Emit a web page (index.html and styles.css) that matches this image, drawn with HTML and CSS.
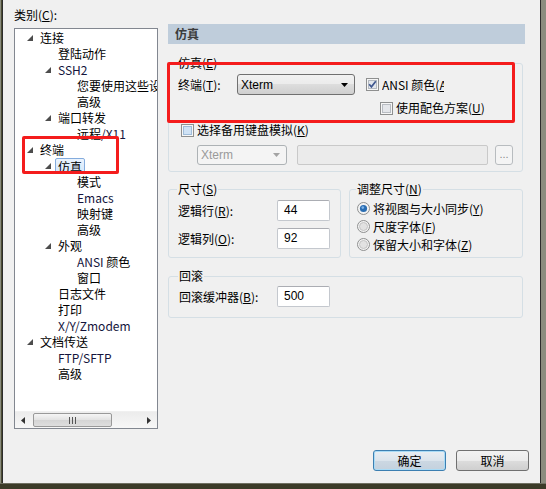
FILE: index.html
```html
<!DOCTYPE html>
<html lang="zh-CN">
<head>
<meta charset="utf-8">
<title>会话选项</title>
<link rel="stylesheet" href="styles.css">
</head>
<body>
<div class="screen">
  <div class="main">
    <div class="edge-l"></div>
    <div class="window">
      <div class="content">
        <div class="left">
          <div class="cat-label">类别(<u>C</u>):</div>
          <div class="tree">
            <div class="tree-rows">
              <div class="row l0"><span class="tw"><svg width="6" height="6" viewBox="0 0 6 6"><polygon points="6,0 6,6 0,6" fill="#4d4d4d"/></svg></span>连接</div>
              <div class="row l1">登陆动作</div>
              <div class="row l1"><span class="tw"><svg width="6" height="6" viewBox="0 0 6 6"><polygon points="6,0 6,6 0,6" fill="#4d4d4d"/></svg></span><span class="en">SSH2</span></div>
              <div class="row l2">您要使用这些设置</div>
              <div class="row l2">高级</div>
              <div class="row l1"><span class="tw"><svg width="6" height="6" viewBox="0 0 6 6"><polygon points="6,0 6,6 0,6" fill="#4d4d4d"/></svg></span>端口转发</div>
              <div class="row l2">远程<span class="en">/X11</span></div>
              <div class="row l0"><span class="tw"><svg width="6" height="6" viewBox="0 0 6 6"><polygon points="6,0 6,6 0,6" fill="#4d4d4d"/></svg></span>终端</div>
              <div class="row l1"><span class="tw"><svg width="6" height="6" viewBox="0 0 6 6"><polygon points="6,0 6,6 0,6" fill="#4d4d4d"/></svg></span><span class="sel">仿真</span></div>
              <div class="row l2">模式</div>
              <div class="row l2"><span class="en">Emacs</span></div>
              <div class="row l2">映射键</div>
              <div class="row l2">高级</div>
              <div class="row l1"><span class="tw"><svg width="6" height="6" viewBox="0 0 6 6"><polygon points="6,0 6,6 0,6" fill="#4d4d4d"/></svg></span>外观</div>
              <div class="row l2"><span class="en">ANSI</span> 颜色</div>
              <div class="row l2">窗口</div>
              <div class="row l1">日志文件</div>
              <div class="row l1">打印</div>
              <div class="row l1"><span class="en">X/Y/Zmodem</span></div>
              <div class="row l0"><span class="tw"><svg width="6" height="6" viewBox="0 0 6 6"><polygon points="6,0 6,6 0,6" fill="#4d4d4d"/></svg></span>文档传送</div>
              <div class="row l1"><span class="en">FTP/SFTP</span></div>
              <div class="row l1">高级</div>
            </div>
            <div class="hscroll">
              <div class="sb-btn"><svg width="4" height="7" viewBox="0 0 4 7"><polygon points="4,0 4,7 0,3.5" fill="#333"/></svg></div>
              <div class="sb-track">
                <div class="sb-thumb"><svg width="7" height="7" viewBox="0 0 7 7"><path d="M0.5 0V7M3.5 0V7M6.5 0V7" stroke="#555" stroke-width="1"/></svg></div>
              </div>
              <div class="sb-btn"><svg width="4" height="7" viewBox="0 0 4 7"><polygon points="0,0 0,7 4,3.5" fill="#333"/></svg></div>
            </div>
          </div>
        </div>

        <div class="right">
          <div class="header">仿真</div>

          <fieldset class="group g-emu">
            <legend>仿真(<u>E</u>)</legend>
            <div class="emu-row1">
              <span class="lbl lbl-term">终端(<u>T</u>):</span>
              <div class="combo">
                <span>Xterm</span>
                <svg width="7" height="4" viewBox="0 0 7 4"><polygon points="0,0 7,0 3.5,4" fill="#000"/></svg>
              </div>
              <span class="check ansi">
                <svg width="13" height="13" viewBox="0 0 13 13"><rect x="0.5" y="0.5" width="12" height="12" fill="#f6f6f6" stroke="#8e8f8f"/><rect x="2.5" y="2.5" width="8" height="8" fill="#e2e6ec" stroke="#b4b9c0"/><path d="M3.2 6.3 L5.4 8.8 L9.8 3.2" stroke="#3f578f" stroke-width="1.7" fill="none"/></svg>
                <span class="ansi-text">ANSI 颜色(<u>A</u>)</span>
              </span>
            </div>
            <div class="emu-row2">
              <span class="check">
                <svg width="13" height="13" viewBox="0 0 13 13"><rect x="0.5" y="0.5" width="12" height="12" fill="#f6f6f6" stroke="#8e8f8f"/><rect x="2.5" y="2.5" width="8" height="8" fill="#e4e6ea" stroke="#b8bcc2"/></svg>
                <span>使用配色方案(<u>U</u>)</span>
              </span>
            </div>
            <div class="emu-row3">
              <span class="check">
                <svg width="13" height="13" viewBox="0 0 13 13"><rect x="0.5" y="0.5" width="12" height="12" fill="#f6f6f6" stroke="#8e8f8f"/><rect x="2.5" y="2.5" width="8" height="8" fill="#cfe2f5" stroke="#9fbcd9"/></svg>
                <span>选择备用键盘模拟(<u>K</u>)</span>
              </span>
            </div>
            <div class="emu-row4">
              <div class="combo disabled">
                <span>Xterm</span>
                <svg width="7" height="4" viewBox="0 0 7 4"><polygon points="0,0 7,0 3.5,4" fill="#a3a3a3"/></svg>
              </div>
              <div class="textbox disabled"></div>
              <div class="dots">...</div>
            </div>
          </fieldset>

          <div class="pair">
            <fieldset class="group g-size">
              <legend>尺寸(<u>S</u>)</legend>
              <div class="field-row">
                <span class="lbl lbl-size">逻辑行(<u>R</u>):</span>
                <div class="textbox num">44</div>
              </div>
              <div class="field-row">
                <span class="lbl lbl-size">逻辑列(<u>O</u>):</span>
                <div class="textbox num">92</div>
              </div>
            </fieldset>
            <fieldset class="group g-adjust">
              <legend>调整尺寸(<u>N</u>)</legend>
              <div class="radio-row">
                <svg width="13" height="13" viewBox="0 0 13 13"><circle cx="6.5" cy="6.5" r="6" fill="#f3f3f3" stroke="#8e8f8f"/><circle cx="6.5" cy="6.5" r="3.6" fill="#2a6db2"/><circle cx="5.8" cy="5.6" r="1.3" fill="#7fb4e8"/></svg>
                <span>将视图与大小同步(<u>Y</u>)</span>
              </div>
              <div class="radio-row">
                <svg width="13" height="13" viewBox="0 0 13 13"><circle cx="6.5" cy="6.5" r="6" fill="#f3f3f3" stroke="#8e8f8f"/><circle cx="6.5" cy="6.5" r="4" fill="#e2e2e2" stroke="#c4c4c4"/></svg>
                <span>尺度字体(<u>F</u>)</span>
              </div>
              <div class="radio-row">
                <svg width="13" height="13" viewBox="0 0 13 13"><circle cx="6.5" cy="6.5" r="6" fill="#f3f3f3" stroke="#8e8f8f"/><circle cx="6.5" cy="6.5" r="4" fill="#e2e2e2" stroke="#c4c4c4"/></svg>
                <span>保留大小和字体(<u>Z</u>)</span>
              </div>
            </fieldset>
          </div>

          <fieldset class="group g-scroll">
            <legend>回滚</legend>
            <div class="field-row">
              <span class="lbl lbl-size">回滚缓冲器(<u>B</u>):</span>
              <div class="textbox num">500</div>
            </div>
          </fieldset>
        </div>
      </div>

      <div class="buttons">
        <div class="btn btn-default">确定</div>
        <div class="btn">取消</div>
      </div>
    </div>
    <div class="edge-r"></div>
  </div>
  <div class="edge-b"></div>

  <div class="mark mark-tree"></div>
  <div class="mark mark-emu"></div>
</div>
</body>
</html>
```

FILE: styles.css
```css
* { box-sizing: border-box; }

html, body {
  margin: 0;
  padding: 0;
  background: #3b3b28;
}

body {
  font-family: "Noto Sans CJK SC", "Liberation Sans", sans-serif;
  font-size: 12px;
  color: #000;
}

u { text-decoration: underline; text-underline-offset: 1px; }

.en { color: #14143c; }

.screen {
  position: relative;
  width: 546px;
  height: 489px;
  display: flex;
  flex-direction: column;
  overflow: hidden;
}

.main {
  display: flex;
  height: 483px;
}

.edge-l {
  width: 3px;
  background: linear-gradient(to right, #8a8c7e 0 1px, #4c4c34 1px 2px, #2c2c2c 2px 3px);
}

.edge-r {
  width: 6px;
  background: #8a8c7e;
  border-left: 1px solid #2c2c2c;
}

.edge-b {
  height: 6px;
  background: #3b3b28;
  border-top: 1px solid #6f7062;
}

.window {
  width: 537px;
  background: #f0f0f0;
  padding: 7px 11px 0 11px;
  display: flex;
  flex-direction: column;
}

.content {
  display: flex;
  gap: 10px;
}

/* ---------- left tree ---------- */
.left {
  width: 144px;
  display: flex;
  flex-direction: column;
}

.cat-label {
  height: 16px;
  line-height: 16px;
  margin-bottom: 5px;
}

.tree {
  height: 401px;
  border: 1px solid #828790;
  background: #fff;
  display: flex;
  flex-direction: column;
  overflow: hidden;
}

.tree-rows {
  flex: 1;
  padding-top: 1px;
  overflow: hidden;
}

.row {
  height: 16px;
  line-height: 16px;
  white-space: nowrap;
  overflow: hidden;
}

.l0 { padding-left: 25px; }
.l1 { padding-left: 43px; }
.l2 { padding-left: 62px; }

.tw {
  display: inline-block;
  width: 14px;
  margin-left: -14px;
  height: 16px;
  vertical-align: top;
  position: relative;
}

.tw svg {
  position: absolute;
  left: 1px;
  top: 5px;
}

.sel {
  display: inline-block;
  height: 17px;
  line-height: 15px;
  padding: 0 2px;
  margin-left: -3px;
  border: 1px solid #84acdd;
  border-radius: 2px;
  background: linear-gradient(#eaf3fd, #d3e5fa);
  vertical-align: top;
}

.hscroll {
  height: 17px;
  display: flex;
  background: linear-gradient(#ececec, #f7f7f7);
  border-top: 1px solid #f0f0f0;
}

.sb-btn {
  width: 17px;
  display: flex;
  align-items: center;
  justify-content: center;
}

.sb-track {
  flex: 1;
  padding: 0 30px 0 2px;
  display: flex;
  align-items: center;
}

.sb-thumb {
  width: 79px;
  height: 14px;
  border: 1px solid #999;
  border-radius: 2px;
  background: linear-gradient(#f5f5f5, #e2e2e2 50%, #d4d4d4 50%, #dedede);
  display: flex;
  align-items: center;
  justify-content: center;
}

/* ---------- right panel ---------- */
.right {
  width: 357px;
  margin-top: 17px;
  display: flex;
  flex-direction: column;
}

.header {
  height: 20px;
  line-height: 20px;
  background: #bfcddb;
  color: #3c3c3c;
  font-weight: bold;
  padding-left: 7px;
}

.group {
  margin: 0;
  min-width: 0;
  border: 1px solid #d5dfe5;
  border-radius: 3px;
  width: 355px;
}

.group legend {
  padding: 0 1px;
  margin-left: -1px;
  line-height: 14px;
  height: 14px;
}

.g-emu {
  margin-top: 12px;
  padding: 4px 0 6px 9px;
}

.emu-row1 {
  display: flex;
  align-items: center;
  height: 21px;
}

.lbl-term { width: 59px; }

.combo {
  width: 118px;
  height: 21px;
  border: 1px solid #707070;
  border-radius: 3px;
  background: linear-gradient(#f2f2f2, #ebebeb 50%, #dddddd 50%, #cfcfcf);
  display: flex;
  align-items: center;
  justify-content: space-between;
  padding: 0 6px 0 3px;
  font-family: "Liberation Sans", sans-serif;
  font-size: 12px;
}

.check {
  display: flex;
  align-items: center;
  gap: 3px;
  height: 14px;
  line-height: 14px;
}

.ansi { margin-left: 11px; }

.ansi-text {
  width: 62px;
  overflow: hidden;
  white-space: nowrap;
}

.emu-row2 {
  margin-top: 6px;
  padding-left: 202px;
}

.emu-row3 {
  margin-top: 8px;
  padding-left: 3px;
}

.emu-row4 {
  margin-top: 8px;
  padding-left: 19px;
  display: flex;
  align-items: center;
  height: 20px;
}

.combo.disabled {
  width: 90px;
  height: 20px;
  background: #f4f4f4;
  border-color: #adb2b5;
  color: #9a9a9a;
}

.textbox {
  height: 21px;
  background: #fff;
  border: 1px solid #c4c8ce;
  border-top-color: #abadb3;
  border-radius: 2px;
}

.textbox.disabled {
  width: 191px;
  height: 20px;
  margin-left: 10px;
  background: #ebebeb;
  border-color: #c9c9c9;
}

.dots {
  width: 18px;
  height: 20px;
  margin-left: 7px;
  border: 1px solid #b8bcbf;
  border-radius: 3px;
  background: #f4f4f4;
  color: #8a8a8a;
  font-family: "Liberation Sans", sans-serif;
  font-size: 11px;
  line-height: 16px;
  text-align: center;
}

.pair {
  display: flex;
  gap: 8px;
  margin-top: 10px;
}

.g-size {
  width: 173px;
  padding: 4px 0 8px 9px;
}

.g-adjust {
  width: 174px;
  padding: 3px 0 3px 7px;
}

.field-row {
  display: flex;
  align-items: center;
  height: 21px;
}

.field-row + .field-row { margin-top: 7px; }

.lbl-size { width: 99px; }

.textbox.num {
  width: 53px;
  padding-left: 6px;
  line-height: 19px;
  font-family: "Liberation Sans", sans-serif;
}

.radio-row {
  height: 18px;
  display: flex;
  align-items: center;
  gap: 3px;
  white-space: nowrap;
}

.g-scroll {
  margin-top: 11px;
  padding: 3px 0 10px 10px;
}

.g-scroll .lbl-size { width: 98px; }

/* ---------- buttons ---------- */
.buttons {
  margin-top: 21px;
  display: flex;
  justify-content: flex-end;
  gap: 10px;
}

.btn {
  width: 73px;
  height: 21px;
  border: 1px solid #707070;
  border-radius: 3px;
  background: linear-gradient(#f2f2f2, #ebebeb 50%, #dddddd 50%, #cfcfcf);
  text-align: center;
  line-height: 19px;
}

.btn-default {
  border-color: #3c7fb1;
  box-shadow: inset 0 0 0 1px #a9dbf6;
  background: linear-gradient(#e9eef3, #dbe4ec 50%, #ccd8e3 50%, #c4d1dd);
}

/* ---------- red annotations ---------- */
.mark {
  position: absolute;
  border: 3px solid #f41c1c;
  border-radius: 2px;
}

.mark-tree {
  left: 22px;
  top: 136px;
  width: 97px;
  height: 38px;
}

.mark-emu {
  left: 167px;
  top: 62px;
  width: 348px;
  height: 61px;
}
```
